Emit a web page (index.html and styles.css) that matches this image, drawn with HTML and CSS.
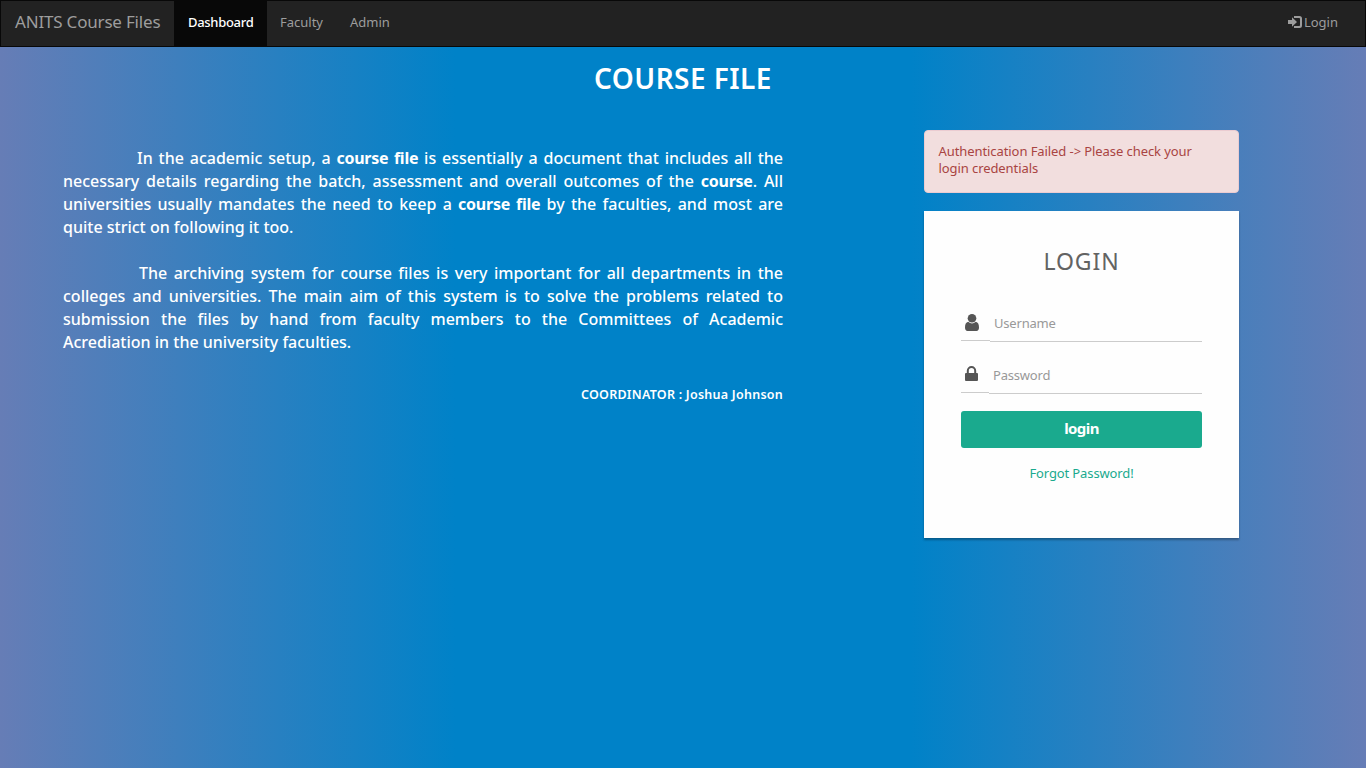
FILE: index.html
```html
<!DOCTYPE html>
<html lang="en">
<head>
<meta charset="utf-8">
<title>ANITS Course Files</title>
<link rel="stylesheet" href="styles.css">
</head>
<body>
<nav class="navbar">
  <a class="brand">ANITS Course Files</a>
  <a class="nav-link active">Dashboard</a>
  <a class="nav-link faculty">Faculty</a>
  <a class="nav-link admin">Admin</a>
  <a class="nav-link signin">
    <svg class="signin-icon" viewBox="0 0 14 12"><path d="M0 4h4V1.200L9 6 4 10.800V8H0z"/><path d="M6 0h5.500A2.500 2.500 0 0 1 14 2.500v7A2.500 2.500 0 0 1 11.500 12H6v-2h5.200a.8.8 0 0 0 .8-.8V2.800a.8.8 0 0 0-.8-.8H6z"/></svg><span>Login</span>
  </a>
</nav>
<h1 class="title"><span>COURSE FILE</span></h1>
<main class="content">
  <section class="about">
    <p class="para">
      <span class="line first">In the academic setup, a <b>course file</b> is essentially a document that includes all the</span>
      <span class="line">necessary details regarding the batch, assessment and overall outcomes of the <b>course</b>. All</span>
      <span class="line">universities usually mandates the need to keep a <b>course file</b> by the faculties, and most are</span>
      <span class="line last">quite strict on following it too.</span>
    </p>
    <p class="para">
      <span class="line second">The archiving system for course files is very important for all departments in the</span>
      <span class="line">colleges and universities. The main aim of this system is to solve the problems related to</span>
      <span class="line">submission the files by hand from faculty members to the Committees of Academic</span>
      <span class="line last">Acrediation in the university faculties.</span>
    </p>
    <p class="coordinator">COORDINATOR : Joshua Johnson</p>
  </section>
  <aside class="side">
    <div class="alert">Authentication Failed -&gt; Please check your<br>login credentials</div>
    <form class="card">
      <h2 class="card-title">LOGIN</h2>
      <div class="field user">
        <span class="addon"><svg class="icon-user" viewBox="0 0 14 17"><circle cx="7" cy="4.300" r="4.300"/><path d="M3.200 7.700Q7 11.300 10.800 7.700C13 8.200 14 10 14 13.500 14 15.700 13 17 11.500 17h-9C1 17 0 15.700 0 13.500 0 10 1 8.200 3.200 7.700z"/></svg></span>
        <span class="input">Username</span>
      </div>
      <div class="field pass">
        <span class="addon"><svg class="icon-lock" viewBox="0 0 13 15"><path fill-rule="evenodd" d="M1.800 7V4.700a4.700 4.700 0 0 1 9.400 0V7h.8a1 1 0 0 1 1 1v6a1 1 0 0 1-1 1H1a1 1 0 0 1-1-1V8a1 1 0 0 1 1-1zm2 0h5.400V4.700a2.700 2.700 0 0 0-5.400 0z"/></svg></span>
        <span class="input">Password</span>
      </div>
      <div class="button"><span>login</span></div>
      <a class="forgot">Forgot Password!</a>
    </form>
  </aside>
</main>
</body>
</html>
```
FILE: styles.css
```css
* { box-sizing: border-box; }
body {
  margin: 0;
  height: 768px;
  overflow: hidden;
  font-family: "Noto Sans", sans-serif;
  font-size: 13px;
  background: linear-gradient(to right, #667db6, #0082c8, #0082c8, #667db6);
}
svg { display: block; fill: currentColor; }
.navbar {
  display: flex;
  height: 47px;
  background: #222;
  border: 1px solid #080808;
  color: #9d9d9d;
  line-height: 43px;
  white-space: nowrap;
}
.brand { width: 173px; padding-left: 14px; font-size: 17px; line-height: 42px; letter-spacing: -0.190px; }
.nav-link { font-size: 13px; }
.active { width: 93px; padding-left: 14px; background: #080808; color: #fff; font-weight: 500; letter-spacing: -0.300px; }
.faculty { width: 70px; padding-left: 13px; }
.admin { padding-left: 13px; }
.signin { display: flex; align-items: flex-start; gap: 2px; margin-left: auto; padding-right: 27px; }
.signin-icon { width: 14px; height: 12px; margin-top: 15px; }
.title {
  margin: 0;
  padding-top: 13px;
  height: 83px;
  line-height: 36px;
  font-size: 28px;
  font-weight: 600;
  letter-spacing: 0.450px;
  text-align: center;
  color: #fff;
}
.content { display: flex; padding-left: 63px; }
.about { width: 720px; margin-right: 141px; padding-top: 17px; color: #fff; }
.para { margin: 0 0 23px; font-size: 16px; line-height: 23px; font-weight: 500; }
.para b { letter-spacing: -0.250px; }
.line { display: block; white-space: nowrap; text-align-last: justify; }
.first { padding-left: 74px; }
.second { padding-left: 76px; }
.last { text-align-last: left; }
.coordinator { margin: 32px 0 0; line-height: 18px; font-size: 12.500px; font-weight: 600; letter-spacing: 0.250px; text-align: right; }
.side { width: 315px; }
.alert {
  height: 63px;
  margin-bottom: 18px;
  padding: 12px 13.500px;
  border: 1px solid #ebccd1;
  border-radius: 4px;
  background: #f2dede;
  color: #a94442;
  line-height: 17px;
  letter-spacing: -0.080px;
}
.card {
  height: 327px;
  padding: 33px 37px 0;
  background: #fefefe;
  box-shadow: 0 2px 2px rgba(0, 0, 0, .3);
}
.card-title { margin: 0 0 32px; color: #636363; font-size: 23px; line-height: 34px; font-weight: 400; letter-spacing: 0.900px; text-align: center; }
.field { display: flex; align-items: flex-start; height: 32px; margin-bottom: 20px; }
.addon { height: 31px; width: 29px; padding: 4px 0 0 4px; border-bottom: 1px solid #ccc; color: #555; }
.pass .addon { width: 28px; }
.icon-user { width: 14px; height: 17px; }
.icon-lock { width: 13px; height: 15px; }
.input { flex: 1; height: 32px; padding: 4px 0 0 4px; border-bottom: 1px solid #ccc; color: #999; line-height: 18px; letter-spacing: -0.200px; }
.pass { margin-bottom: 17px; }
.button { height: 37px; border-radius: 3px; background: #1aaa8e; color: #fff; font-size: 15px; line-height: 35px; font-weight: 700; letter-spacing: -0.600px; text-align: center; }
.forgot { display: block; margin-top: 16px; color: #1aaa8e; line-height: 18px; letter-spacing: -0.120px; text-align: center; }
```
